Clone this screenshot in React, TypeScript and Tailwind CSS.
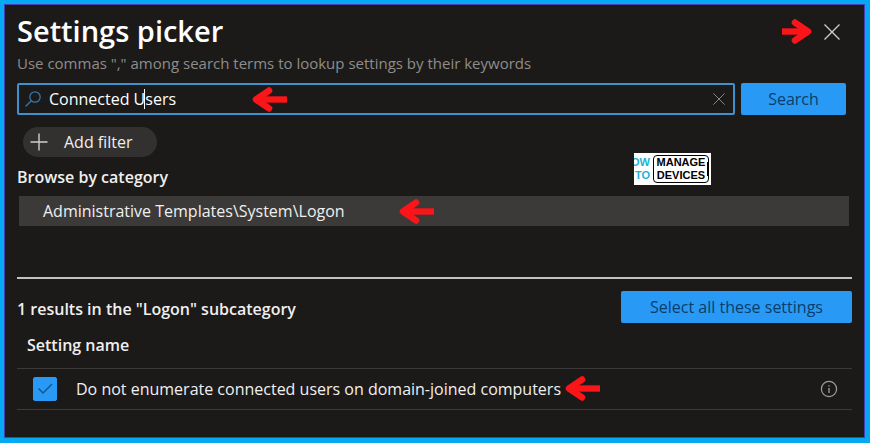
import { useState } from 'react';

interface Setting {
  id: string;
  name: string;
}

const SETTINGS: Setting[] = [
  { id: 'enumerate-users', name: 'Do not enumerate connected users on domain-joined computers' },
];

function Arrow({ className = '' }: { className?: string }) {
  return (
    <svg viewBox="0 0 35 25" className={`w-[35px] h-[25px] shrink-0 ${className}`} fill="none" aria-hidden="true">
      <path d="M35 12.5H7" stroke="#fb1418" strokeWidth="6.4" />
      <path d="M17 3.6L4 12.5L17 21.4" stroke="#fb1418" strokeWidth="6.6" strokeLinecap="round" strokeLinejoin="round" />
    </svg>
  );
}

function ShortArrow() {
  return (
    <svg viewBox="0 0 30 25" className="w-[30px] h-[25px] shrink-0" fill="none" aria-hidden="true">
      <path d="M0 12.5H23" stroke="#fb1418" strokeWidth="6.4" />
      <path d="M13 3.6L26 12.5L13 21.4" stroke="#fb1418" strokeWidth="6.6" strokeLinecap="round" strokeLinejoin="round" />
    </svg>
  );
}

function Cross({ className = '' }: { className?: string }) {
  return (
    <svg viewBox="0 0 16 16" className={className} fill="none" stroke="currentColor" aria-hidden="true">
      <path d="M0.5 0.5L15.5 15.5M15.5 0.5L0.5 15.5" strokeWidth="1.3" />
    </svg>
  );
}

function Logo() {
  return (
    <div className="relative flex items-center w-[77px] h-8 bg-white overflow-hidden font-['Liberation_Sans_Narrow','Liberation_Sans',sans-serif] font-bold text-[11px] leading-[13px]">
      <div className="w-4 shrink-0 flex flex-col items-end text-[#22b2da]">
        <span>HOW</span>
        <span>TO</span>
      </div>
      <div className="ml-[3px] w-[56px] h-7 shrink-0 flex flex-col items-center justify-center border border-black rounded text-black">
        <span>MANAGE</span>
        <span>DEVICES</span>
      </div>
      <div className="absolute right-[2px] top-[9px] w-[2px] h-[14px] bg-black" />
    </div>
  );
}

export default function App() {
  const [query, setQuery] = useState('Connected Users');
  const [selected, setSelected] = useState<string[]>(['enumerate-users']);

  function toggle(id: string) {
    setSelected((prev) => (prev.includes(id) ? prev.filter((s) => s !== id) : [...prev, id]));
  }

  return (
    <div className="min-h-screen flex bg-[#05a9f2] pt-1 pl-1 pr-[5px] pb-[5px] font-['Open_Sans','Noto_Sans',sans-serif] text-base text-[#f0efee]">
      <main className="flex-1 min-w-0 bg-[#1b1a19] border border-[#4640b8] pl-3 pr-3">
        {/* Header */}
        <header className="flex items-start justify-between pt-2">
          <div>
            <h1 className="text-[29px] leading-9 font-semibold text-white">Settings picker</h1>
            <p className="mt-1 text-[15px] leading-5 text-[#8f8d8b]">
              Use commas "," among search terms to lookup settings by their keywords
            </p>
          </div>
          <div className="flex items-center gap-2 mt-[6px] mr-2">
            <ShortArrow />
            <button aria-label="Close" className="p-1 text-[#d0cfce]">
              <Cross className="w-4 h-4" />
            </button>
          </div>
        </header>

        {/* Search */}
        <form className="flex gap-[6px] mt-[10px] mr-[6px]" onSubmit={(e) => e.preventDefault()}>
          <div className="relative flex-1 flex items-center h-8 border-2 border-[#3f91cf] rounded-xs pl-[6px] pr-2">
            <svg viewBox="0 0 16 16" className="w-4 h-4 shrink-0 text-[#3577ad]" fill="none" stroke="currentColor" aria-hidden="true">
              <circle cx="10" cy="6" r="5.2" strokeWidth="1.3" />
              <path d="M6.2 9.8L0.6 15.4" strokeWidth="1.4" />
            </svg>
            <input
              type="text"
              aria-label="Search settings"
              value={query}
              onChange={(e) => setQuery(e.target.value)}
              className="flex-1 min-w-0 ml-2 bg-transparent outline-none text-white"
            />
            <button type="button" aria-label="Clear search" onClick={() => setQuery('')} className="text-[#8a8886]">
              <Cross className="w-3 h-3" />
            </button>
            {/* Text cursor */}
            <span className="absolute left-[125px] top-1 w-px h-5 bg-white" />
            <Arrow className="absolute left-[233px] top-[2px]" />
          </div>
          <button type="submit" className="w-[105px] h-8 bg-[#2899f5] rounded-xs text-[#0b3d6b]">
            Search
          </button>
        </form>

        <div className="flex items-start justify-between">
          <div>
            <button className="flex items-center gap-4 h-[30px] mt-3 ml-[6px] pl-[7px] pr-6 rounded-full bg-[#323130]">
              <svg viewBox="0 0 18 18" className="w-[18px] h-[18px]" fill="none" stroke="#d0cfce" strokeWidth="1.4" aria-hidden="true">
                <path d="M9 0.5V17.5M0.5 9H17.5" />
              </svg>
              Add filter
            </button>
            <h2 className="mt-2 leading-6 font-semibold">Browse by category</h2>
          </div>
          <div className="mt-[38px] mr-[141px]">
            <Logo />
          </div>
        </div>

        {/* Category */}
        <div className="ml-[2px] mr-[3px] mt-[7px] h-[30px] flex items-center gap-[54px] pl-6 bg-[#3b3a39]">
          <a href="#logon">Administrative Templates\System\Logon</a>
          <Arrow />
        </div>

        <hr className="mt-[51px] border-0 h-[2px] bg-[#c3c2c1]" />

        {/* Results */}
        <section id="logon">
          <div className="flex items-center justify-between mt-3">
            <h2 className="pt-1 font-semibold">1 results in the "Logon" subcategory</h2>
            <button
              onClick={() => setSelected(SETTINGS.map((s) => s.id))}
              className="w-[231px] h-8 bg-[#2899f5] rounded-xs text-[#0b3d6b]"
            >
              Select all these settings
            </button>
          </div>
          <table className="w-full">
            <thead>
              <tr className="h-[45px] border-b border-[#3b3a39]">
                <th className="pl-[10px] text-left font-semibold" colSpan={2}>Setting name</th>
              </tr>
            </thead>
            <tbody>
              {SETTINGS.map((setting) => (
                <tr key={setting.id} className="h-[41px] border-b border-[#3b3a39]">
                  <td className="pl-4">
                    <div className="flex items-center">
                      <span className="relative flex w-6 h-6">
                        <input
                          type="checkbox"
                          id={setting.id}
                          checked={selected.includes(setting.id)}
                          onChange={() => toggle(setting.id)}
                          className="peer appearance-none w-6 h-6 rounded-xs border border-[#8a8886] checked:border-[#2899f5] checked:bg-[#2899f5]"
                        />
                        <svg viewBox="0 0 24 24" className="absolute inset-0 w-6 h-6 pointer-events-none opacity-0 peer-checked:opacity-100" fill="none" aria-hidden="true">
                          <path d="M5.5 11.5L10 16L19 7" stroke="#15568f" strokeWidth="1.5" />
                        </svg>
                      </span>
                      <label htmlFor={setting.id} className="ml-[19px] mr-1">{setting.name}</label>
                      <Arrow />
                    </div>
                  </td>
                  <td className="w-10 pr-[14px]">
                    <button aria-label="More information" className="flex ml-auto text-[#a19f9d]">
                      <svg viewBox="0 0 18 18" className="w-[18px] h-[18px]" fill="none" stroke="currentColor" aria-hidden="true">
                        <circle cx="9" cy="9" r="7.6" strokeWidth="1.2" />
                        <path d="M9 8V13M9 5.2V6.6" strokeWidth="1.3" />
                      </svg>
                    </button>
                  </td>
                </tr>
              ))}
            </tbody>
          </table>
        </section>
      </main>
    </div>
  );
}
